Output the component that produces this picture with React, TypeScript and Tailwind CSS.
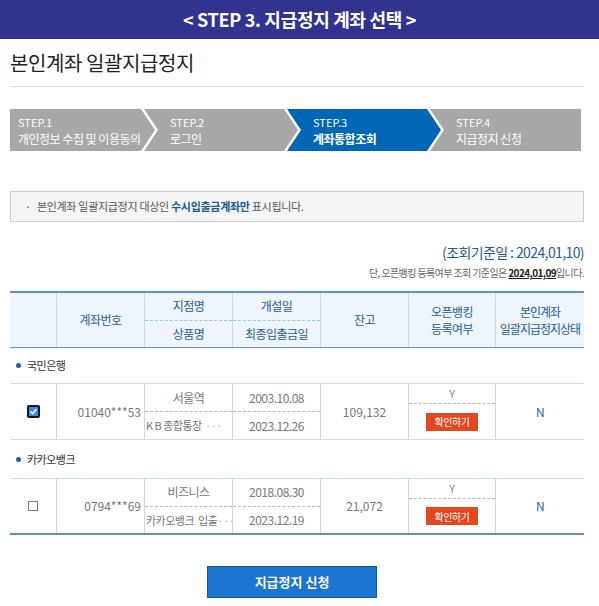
const COLS = "grid grid-cols-[46px_88px_88px_88px_88px_87px_89px]";

const STEPS = [
  { no: "STEP.1", label: "개인정보 수집 및 이용동의", w: "w-[145px]", pad: "pl-[8px]", clip: "[clip-path:polygon(0_0,calc(100%_-_14px)_0,100%_50%,calc(100%_-_14px)_100%,0_100%)]" },
  { no: "STEP.2", label: "로그인", w: "w-[154px]", pad: "pl-[26px]", clip: "[clip-path:polygon(0_0,calc(100%_-_14px)_0,100%_50%,calc(100%_-_14px)_100%,0_100%,14px_50%)]" },
  { no: "STEP.3", label: "계좌통합조회", w: "w-[154px]", pad: "pl-[26px]", clip: "[clip-path:polygon(0_0,calc(100%_-_14px)_0,100%_50%,calc(100%_-_14px)_100%,0_100%,14px_50%)]", active: true },
  { no: "STEP.4", label: "지급정지 신청", w: "flex-1", pad: "pl-[26px]", clip: "[clip-path:polygon(0_0,100%_0,100%_100%,0_100%,14px_50%)]" },
];

const ROWS = [
  {
    bank: "국민은행",
    checked: true,
    account: "01040***53",
    branch: "서울역",
    product: "K B 종합통장",
    spread: true,
    opened: "2003.10.08",
    last: "2023.12.26",
    balance: "109,132",
  },
  {
    bank: "카카오뱅크",
    checked: false,
    account: "0794***69",
    branch: "비즈니스",
    product: "카카오뱅크  입출",
    spread: false,
    opened: "2018.08.30",
    last: "2023.12.19",
    balance: "21,072",
  },
];

function CheckBox({ checked }: { checked: boolean }) {
  if (!checked) {
    return <span className="block w-[10px] h-[10px] border border-[#7d7d7d] bg-white" />;
  }
  return (
    <svg width="13" height="13" viewBox="0 0 13 13">
      <rect x="0" y="0" width="13" height="13" rx="2" fill="#0c1b33" />
      <rect x="2" y="2" width="9" height="9" fill="#3b8de0" />
      <path d="M3.6 6.6 L5.6 8.6 L9.4 4.2" fill="none" stroke="#fff" strokeWidth="1.6" />
    </svg>
  );
}

function Split({ top, bottom, head }: { top: React.ReactNode; bottom: React.ReactNode; head?: boolean }) {
  return (
    <div className="flex flex-col border-l border-[#c6d9ea]">
      <div className={`flex-1 flex items-center justify-center border-b border-dashed ${head ? "border-[#a7c2dc]" : "border-[#b9b9b9]"}`}>
        {top}
      </div>
      <div className="flex-1 flex items-center">{bottom}</div>
    </div>
  );
}

export default function App() {
  return (
    <div className="w-[599px] h-[606px] overflow-hidden bg-white font-['Noto_Sans_CJK_KR',sans-serif]">
      <div className="h-[39px] bg-[#32338e] flex items-center justify-center text-white font-bold text-[18px] tracking-[-0.3px]">
        &lt; STEP 3. 지급정지 계좌 선택 &gt;
      </div>

      <div className="ml-[10px] w-[574px]">
        <div className="pt-[10px] pb-[10px] border-b border-[#dcdcdc]">
          <h1 className="text-[20px] leading-[27px] text-[#222] tracking-[-0.4px]">본인계좌 일괄지급정지</h1>
        </div>

        <div className="mt-[22px] w-[571px] h-[42px] flex">
          {STEPS.map((s, i) => (
            <div
              key={s.no}
              className={`${s.w} ${s.pad} ${s.clip} ${i > 0 ? "-ml-[11px]" : ""} ${
                s.active ? "bg-[#0067b4]" : "bg-[#a7a7a7]"
              } h-full flex flex-col justify-center text-white`}
            >
              <span className="text-[11px] leading-[16px]">{s.no}</span>
              <span className={`text-[12px] leading-[17px] tracking-[-0.5px] ${s.active ? "font-bold" : ""}`}>{s.label}</span>
            </div>
          ))}
        </div>

        <div className="mt-[40px] h-[31px] bg-[#f5f5f5] border border-[#cccccc] flex items-center pl-[14px] text-[11px] text-[#555] tracking-[-0.3px]">
          <span className="mr-[6px]">·</span>
          본인계좌 일괄지급정지 대상인&nbsp;<b className="text-[#1c5a97]">수시입출금계좌만</b>&nbsp;표시됩니다.
        </div>

        <div className="mt-[21px] text-right text-[14px] leading-[18px] text-[#1d5a96] tracking-[-0.6px]">
          (조회기준일 : 2024,01,10)
        </div>
        <div className="mt-[5px] text-right text-[10px] leading-[14px] text-[#666] tracking-[-0.6px]">
          단, 오픈뱅킹 등록여부 조회 기준일은 <b className="text-[#222] underline">2024,01,09</b>입니다.
        </div>

        <div className="mt-[11px] text-[12px] tracking-[-0.5px]">
          <div className={`${COLS} h-[57px] border-t-2 border-b border-[#5c92c6] bg-[#eef6fc] text-[#2a5a8d]`}>
            <div />
            <div className="border-l border-[#c6d9ea] flex items-center justify-center">계좌번호</div>
            <Split head top="지점명" bottom={<span className="w-full text-center">상품명</span>} />
            <Split head top="개설일" bottom={<span className="w-full text-center">최종입출금일</span>} />
            <div className="border-l border-[#c6d9ea] flex items-center justify-center">잔고</div>
            <div className="border-l border-[#c6d9ea] flex items-center justify-center text-center leading-[17px]">
              오픈뱅킹
              <br />
              등록여부
            </div>
            <div className="border-l border-[#c6d9ea] flex items-center justify-center text-center leading-[17px] tracking-[-1px]">
              본인계좌
              <br />
              일괄지급정지상태
            </div>
          </div>

          {ROWS.map((r, i) => (
            <div key={r.bank}>
              <div className={`${i === 0 ? "h-[35px]" : "h-[38px]"} flex items-center pl-[6px] text-[11px] text-[#333]`}>
                <span className="w-[5px] h-[5px] rounded-full bg-[#1c63a8] mr-[6px]" />
                {r.bank}
              </div>
              <div
                className={`${COLS} h-[57px] border-t border-[#cddde9] text-[#777] ${
                  i === ROWS.length - 1 ? "border-b-2 border-b-[#5a8fc0]" : "border-b"
                }`}
              >
                <div className="flex items-center justify-center">
                  <CheckBox checked={r.checked} />
                </div>
                <div className="border-l border-[#c6d9ea] flex items-center justify-end pr-[3px] tracking-[0px]">
                  {r.account}
                </div>
                <Split
                  top={r.branch}
                  bottom={
                    <span className={`w-full flex pl-[1px] text-[11px] ${r.spread ? "justify-between pr-[10px]" : ""}`}>
                      <span className="whitespace-pre">{r.product}</span>
                      <span className="text-[#aaa]">···</span>
                    </span>
                  }
                />
                <Split top={r.opened} bottom={<span className="w-full text-center">{r.last}</span>} />
                <div className="border-l border-[#c6d9ea] flex items-center justify-center tracking-[0px]">{r.balance}</div>
                <div className="border-l border-[#c6d9ea] flex flex-col">
                  <div className="h-[20px] flex items-center justify-center border-b border-dashed border-[#b9b9b9] text-[11px] text-[#888]">
                    Y
                  </div>
                  <div className="flex-1 flex items-center justify-center">
                    <span className="w-[52px] h-[18px] bg-[#e5471f] text-white text-[10px] flex items-center justify-center">
                      확인하기
                    </span>
                  </div>
                </div>
                <div className="border-l border-[#c6d9ea] flex items-center justify-center text-[#2c5d9d]">N</div>
              </div>
            </div>
          ))}
        </div>

        <div className="mt-[31px] flex justify-center">
          <button className="ml-[-10px] w-[170px] h-[32px] bg-[#1b74cf] border border-[#1259a3] text-white font-bold text-[13px]">
            지급정지 신청
          </button>
        </div>
      </div>
    </div>
  );
}
